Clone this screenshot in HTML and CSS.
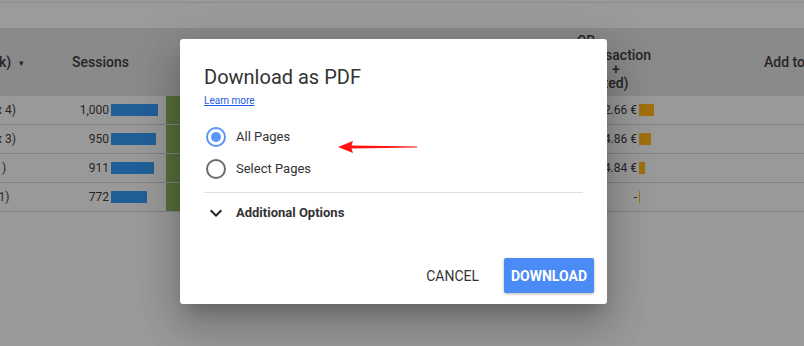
FILE: index.html
```html
<!DOCTYPE html>
<html>
<head>
<meta charset="utf-8">
<link rel="stylesheet" href="styles.css">
</head>
<body>
<div class="report">
  <div class="topbar"></div>
  <div class="thead">
    <div class="c-dim h-dim"><span class="clip">k)</span><span class="caret">&#9662;</span></div>
    <div class="c-sess h-sess">Sessions</div>
    <div class="c-green h-blank"></div>
    <div class="c-gap"></div>
    <div class="c-rev h-rev">
      <div>CR</div>
      <div>Transaction</div>
      <div class="plus">+</div>
      <div class="est">(estimated)</div>
    </div>
    <div class="c-add h-add">Add to cart</div>
  </div>
  <div class="row">
    <div class="c-dim"><span class="clip">x 4)</span></div>
    <div class="c-sess"><span class="num">1,000</span><span class="bar blue" style="width:47px"></span></div>
    <div class="c-green"></div>
    <div class="c-gap"></div>
    <div class="c-rev"><span class="num rnum">2.66 €</span><span class="bar orange" style="width:15px"></span></div>
    <div class="c-add"></div>
  </div>
  <div class="row">
    <div class="c-dim"><span class="clip">x 3)</span></div>
    <div class="c-sess"><span class="num">950</span><span class="bar blue" style="width:45px"></span></div>
    <div class="c-green"></div>
    <div class="c-gap"></div>
    <div class="c-rev"><span class="num rnum">4.86 €</span><span class="bar orange" style="width:12px"></span></div>
    <div class="c-add"></div>
  </div>
  <div class="row">
    <div class="c-dim"><span class="clip">&#8194;)</span></div>
    <div class="c-sess"><span class="num">911</span><span class="bar blue" style="width:43px"></span></div>
    <div class="c-green"></div>
    <div class="c-gap"></div>
    <div class="c-rev"><span class="num rnum">4.84 €</span><span class="bar orange" style="width:6px"></span></div>
    <div class="c-add"></div>
  </div>
  <div class="row">
    <div class="c-dim"><span class="clip">&#8201;1)</span></div>
    <div class="c-sess"><span class="num">772</span><span class="bar blue" style="width:36px"></span></div>
    <div class="c-green"></div>
    <div class="c-gap"></div>
    <div class="c-rev"><span class="num rnum">-</span><span class="bar orange" style="width:1px"></span></div>
    <div class="c-add"></div>
  </div>
</div>

<div class="dialog">
  <h1 class="title">Download as PDF</h1>
  <a class="learn" href="#">Learn more</a>
  <div class="options">
    <label class="opt">
      <svg class="radio" width="24" height="24" viewBox="0 0 24 24"><circle cx="12" cy="12" r="9" fill="none" stroke="#5b96f5" stroke-width="2"/><circle cx="12" cy="12" r="5" fill="#5b96f5"/></svg>
      <span class="opt-label">All Pages</span>
    </label>
    <label class="opt">
      <svg class="radio" width="24" height="24" viewBox="0 0 24 24"><circle cx="12" cy="12" r="9" fill="none" stroke="#6b6b6b" stroke-width="2"/></svg>
      <span class="opt-label">Select Pages</span>
    </label>
  </div>
  <div class="divider"></div>
  <div class="more">
    <svg width="24" height="24" viewBox="0 0 24 24"><path d="M16.59 8.59L12 13.17 7.41 8.59 6 10l6 6 6-6z" fill="#222"/></svg>
    <span class="more-label">Additional Options</span>
  </div>
  <div class="actions">
    <button class="btn cancel">Cancel</button>
    <button class="btn download">Download</button>
  </div>
</div>

<svg class="arrow" width="84" height="20" viewBox="0 0 84 20">
  <polygon points="2,9 17,3 15.5,7.6 81,8.4 81,9.6 15.5,10.6 17,15" fill="#ff1414"/>
</svg>
</body>
</html>
```

FILE: styles.css
```css
html, body {
  margin: 0;
  padding: 0;
}
body {
  width: 804px;
  height: 346px;
  overflow: hidden;
  background: #9a9a9a;
  font-family: Roboto, "Liberation Sans", sans-serif;
  color: #262626;
  position: relative;
}
.report {
  width: 804px;
}
.topbar {
  margin-top: 2px;
  height: 25px;
  border-top: 1px solid #8c8c8c;
  background: #9b9b9b;
}
.thead {
  display: flex;
  height: 68px;
  background: #8a8a8a;
  font-size: 14px;
  font-weight: 500;
  align-items: center;
}
.row {
  display: flex;
  height: 28px;
  border-bottom: 1px solid #808080;
  background: #999999;
  font-size: 12px;
  align-items: center;
}
.c-dim {
  width: 60px;
  flex: none;
  overflow: hidden;
  white-space: nowrap;
}
.clip {
  margin-left: -4px;
}
.h-dim .clip {
  margin-left: -1px;
}
.caret {
  font-size: 9px;
  margin-left: 8px;
  position: relative;
  top: -1px;
}
.c-sess {
  width: 106px;
  flex: none;
  display: flex;
  align-items: center;
}
.h-sess {
  padding-left: 12px;
  box-sizing: border-box;
}
.num {
  width: 49px;
  text-align: right;
  margin-right: 2px;
  flex: none;
}
.bar {
  height: 12px;
  flex: none;
}
.blue { background: #215f98; }
.orange { background: #a0700f; }
.c-green {
  width: 100px;
  flex: none;
  align-self: stretch;
  background: #566f3b;
}
.h-blank {
  background: transparent;
}
.c-gap {
  width: 294px;
  flex: none;
}
.c-rev {
  width: 140px;
  flex: none;
  display: flex;
  align-items: center;
}
.rnum {
  width: 77px;
}
.h-rev {
  display: block;
  padding-left: 17px;
  box-sizing: border-box;
  line-height: 14px;
  white-space: nowrap;
}
.plus {
  padding-left: 35px;
}
.est {
  margin-left: -21px;
}
.c-add {
  flex: 1;
  white-space: nowrap;
  overflow: hidden;
}
.h-add {
  padding-left: 64px;
}

/* dialog */
.dialog {
  position: absolute;
  left: 180px;
  top: 39px;
  width: 427px;
  height: 265px;
  box-sizing: border-box;
  padding: 24px 24px 0 24px;
  background: #fff;
  border-radius: 3px;
  display: flex;
  flex-direction: column;
  box-shadow: 0 11px 15px -7px rgba(0,0,0,.2), 0 24px 38px 3px rgba(0,0,0,.14), 0 9px 46px 8px rgba(0,0,0,.12);
}
.title {
  margin: 0;
  font-size: 20px;
  line-height: 28px;
  font-weight: 400;
  color: #333;
}
.learn {
  margin-top: 2.5px;
  font-size: 10px;
  line-height: 14px;
  color: #1f5ae0;
  text-decoration: underline;
  align-self: flex-start;
}
.options {
  margin-top: 13px;
  display: flex;
  flex-direction: column;
}
.opt {
  height: 32px;
  display: flex;
  align-items: center;
}
.radio {
  flex: none;
}
.opt-label {
  margin-left: 8px;
  font-size: 13px;
  color: #333;
}
.divider {
  margin-top: 7px;
  height: 1px;
  background: #e0e0e0;
}
.more {
  height: 40px;
  display: flex;
  align-items: center;
}
.more-label {
  margin-left: 8px;
  font-size: 13px;
  font-weight: 700;
  color: #333;
}
.actions {
  margin: auto -11px 11px 0;
  display: flex;
  justify-content: flex-end;
  gap: 9px;
}
.btn {
  height: 35px;
  border: none;
  font-family: Roboto, "Liberation Sans", sans-serif;
  font-size: 14px;
  text-transform: uppercase;
  cursor: pointer;
}
.cancel {
  background: none;
  color: #333;
  padding: 0 16px;
}
.download {
  width: 90px;
  padding: 0;
  background: #4b8bf5;
  color: #fff;
  font-weight: 700;
  border-radius: 2px;
  box-shadow: 0 1px 3px rgba(0,0,0,.3);
}
.arrow {
  position: absolute;
  left: 336px;
  top: 138px;
}
```
